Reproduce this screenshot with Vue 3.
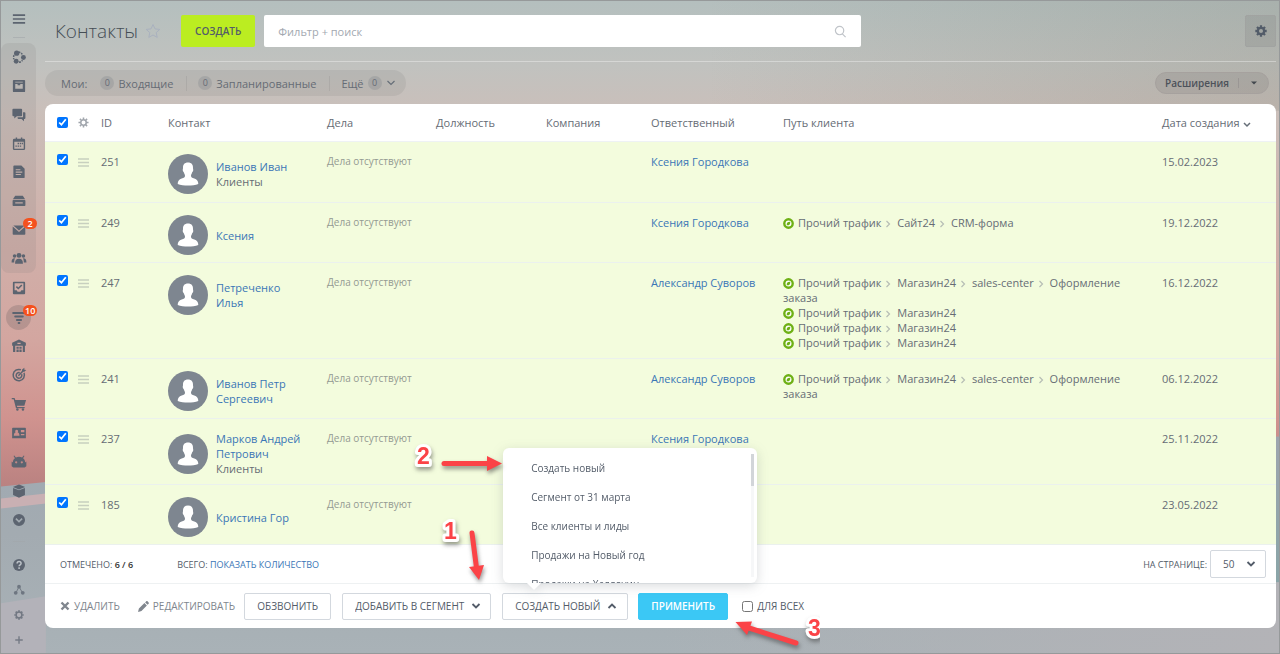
<script setup>
import { ref } from 'vue'

const groupIcons = [
  { name: 'network', label: 'Сеть' },
  { name: 'feed', label: 'Новости' },
  { name: 'chat', label: 'Чат' },
  { name: 'calendar', label: 'Календарь' },
  { name: 'docs', label: 'Документы' },
  { name: 'drive', label: 'Диск' },
  { name: 'mail', label: 'Почта', badge: '2' },
  { name: 'people', label: 'Группы' }
]
const mainIcons = [
  { name: 'tasks', label: 'Задачи' },
  { name: 'crm', label: 'CRM', badge: '10', active: true },
  { name: 'store', label: 'Склад' },
  { name: 'target', label: 'Маркетинг' },
  { name: 'cart', label: 'Магазины' },
  { name: 'card', label: 'Сотрудники' },
  { name: 'robot', label: 'Автоматизация' },
  { name: 'box', label: 'Маркет' },
  { name: 'more', label: 'Ещё' }
]
const bottomIcons = [
  { name: 'help', label: 'Помощь' },
  { name: 'tree', label: 'Структура' },
  { name: 'gear', label: 'Настройки' },
  { name: 'plus', label: 'Добавить' }
]

const icons = {
  menu: '<path d="M2 3.500h13v1.800H2zM2 7.600h13v1.800H2zM2 11.700h13v1.800H2z"/>',
  network: '<circle cx="6" cy="4.500" r="2.800"/><circle cx="13.200" cy="9" r="2.600"/><circle cx="5.500" cy="13" r="2.600"/><path d="M8 3.200a6 6 0 0 1 4 2.600M3.300 6.500a6 6 0 0 0-.2 4.500M8.500 14.200a6 6 0 0 0 3.700-2.200" fill="none" stroke="currentColor" stroke-width="1.600" stroke-dasharray="2 1"/>',
  feed: '<path fill-rule="evenodd" d="M3 2h11a1 1 0 0 1 1 1v11a1 1 0 0 1-1 1H3a1 1 0 0 1-1-1V3a1 1 0 0 1 1-1zM4.500 6.500v5h8v-5H9.800v1.300H7V6.500zM4.500 4v.9h8V4z"/>',
  chat: '<path d="M2.500 1.800h8.300a1 1 0 0 1 1 1v6a1 1 0 0 1-1 1H6.200L3.500 12.300V9.800h-1a1 1 0 0 1-1-1v-6a1 1 0 0 1 1-1z"/><path d="M12.800 5.500h1.500a1 1 0 0 1 1 1v5.300a1 1 0 0 1-1 1h-.5v2.400L11.200 12.800H8a1 1 0 0 1-1-1V11h4.800a1 1 0 0 0 1-1z"/>',
  calendar: '<path fill-rule="evenodd" d="M3.500 3H5V1.500h1.500V3h4V1.500H12V3h1.500A1.500 1.500 0 0 1 15 4.500v9a1.500 1.500 0 0 1-1.500 1.500h-10A1.500 1.500 0 0 1 2 13.500v-9A1.500 1.500 0 0 1 3.500 3zM3.500 6v7.500h10V6z"/><path d="M7 7.300h1.500v1.500H7zM9.300 7.300h1.500v1.500H9.300zM4.700 10h1.500v1.500H4.700zM7 10h1.500v1.500H7zM9.300 10h1.500v1.500H9.300zM11.500 7.300h1.300v1.500h-1.300z"/>',
  docs: '<path fill-rule="evenodd" d="M3.500 1.500h7.500L14.500 5v9a1 1 0 0 1-1 1h-10a1 1 0 0 1-1-1V2.500a1 1 0 0 1 1-1zM5 5.500v1.200h5V5.500zM5 8v1.200h7V8zM5 10.500v1.200h5.500v-1.200z"/>',
  drive: '<path d="M4.500 3h8L15 6.700H2z"/><path fill-rule="evenodd" d="M2.500 7.500h12a.8.800 0 0 1 .8.800v4.700a.8.800 0 0 1-.8.800h-12a.8.800 0 0 1-.8-.8V8.300a.8.800 0 0 1 .8-.8zM4.500 9.700v1.500h8V9.700z"/>',
  mail: '<path d="M2.500 3.800h12L8.500 9zM1.800 4.800l6.700 5.700L15.200 4.800v8a.8.800 0 0 1-.8.800H2.600a.8.800 0 0 1-.8-.8z"/>',
  people: '<circle cx="8.500" cy="4.700" r="2.600"/><circle cx="3.800" cy="5.300" r="1.900"/><circle cx="13.200" cy="5.300" r="1.900"/><path d="M4.300 13.500c0-3.600 1.100-5.200 4.200-5.200s4.200 1.600 4.200 5.200zM.6 12.200c0-3.200 1-4.500 3.700-4.400-.6 1.200-.9 2.300-.9 4.400zM16.400 12.200c0-3.200-1-4.500-3.700-4.400.6 1.200.9 2.300.9 4.400z"/>',
  tasks: '<path fill-rule="evenodd" d="M3 1.800h11a1 1 0 0 1 1 1v11.400a1 1 0 0 1-1 1H3a1 1 0 0 1-1-1V2.800a1 1 0 0 1 1-1zm.8 1.700v7.500h2.200l1 1.500h3l1-1.500h2.200V3.500z"/><path d="M5.700 7l2.100 2 3.700-3.700" fill="none" stroke="currentColor" stroke-width="1.700"/>',
  crm: '<path d="M2.300 4.200h12.400M4.500 8h8M6.300 11.600h4.400M8.100 14.800h.8" fill="none" stroke="currentColor" stroke-width="2.100" stroke-linecap="round"/>',
  store: '<path fill-rule="evenodd" d="M8.500 1.500L15.800 5v3.200h-1V15H12.500V8.200h-8V15H2.200V8.200h-1V5zM6.800 5v1.300h3.400V5z"/><path d="M5.800 9.200h2.400v2.200H5.800zM8.900 9.200h2.400v2.200H8.900zM5.800 12.200h2.400V15H5.800zM8.900 12.200h2.400V15H8.900z"/>',
  target: '<path d="M13.800 6.200A6 6 0 1 1 10.500 3M11.200 7.600A3 3 0 1 1 9.300 6M7.800 9.200L13 4" fill="none" stroke="currentColor" stroke-width="1.600"/><path d="M11.500 4.700l.3-2L14.200.800v2l2 .3L14.200 5z"/>',
  cart: '<path d="M.8 2h3l.8 2.200H16L14.200 10.300H6.300l.3 1.400H14.500v1.300H5.300L2.800 3.400H.8z"/><circle cx="6.800" cy="14.300" r="1.300"/><circle cx="12.700" cy="14.300" r="1.300"/>',
  card: '<path fill-rule="evenodd" d="M2 3h13a.8.800 0 0 1 .8.800V14H1.200V3.800A.8.800 0 0 1 2 3zM6 5a1.600 1.600 0 0 0-1 2.800C3.600 8.500 3 9.300 3 11.500h6c0-2.200-.6-3-2-3.700A1.600 1.600 0 0 0 6 5zM10.500 5.300v2.500h3.700V5.300zm0 4.200v1.300h3.700V9.500z"/>',
  robot: '<path fill-rule="evenodd" d="M3.500 1.500l1.700 2.200a8 8 0 0 1 6.600 0l1.700-2.200.8.600-1.500 2.300c1.500 1.100 2.200 2.600 2.200 4.600L16.300 8v5l-1.800 1.300h-12L.7 13V8L2 9c0-2 .7-3.500 2.200-4.600L2.700 2.100zM5.500 7.600a1.200 1.200 0 1 0 0 2.400 1.200 1.200 0 0 0 0-2.400zm6 0a1.200 1.200 0 1 0 0 2.400 1.200 1.200 0 0 0 0-2.400z"/>',
  box: '<path d="M8.500 1.500L15 4.200 8.500 7 2 4.200z"/><path d="M2.200 5.300l6.300 2.500 6.300-2.500v7.400l-6.300 2.900-6.300-2.900z"/>',
  more: '<path fill-rule="evenodd" d="M8.500 2.100a6.400 6.400 0 1 1 0 12.800 6.400 6.400 0 0 1 0-12.800zM5.800 6.500L4.600 7.700l3.900 3.800 3.900-3.800-1.200-1.200-2.700 2.600z"/>',
  help: '<circle cx="8.500" cy="8.500" r="6.400"/><path d="M6.500 7c0-2.900 4.200-2.700 4.200-.2 0 1.500-2.100 1.600-2.100 3.100M8.600 11v1.700" fill="none" stroke="#bcc2c8" stroke-width="1.600"/>',
  tree: '<g opacity=".75"><circle cx="8.500" cy="5" r="2"/><circle cx="5" cy="11.500" r="2"/><circle cx="12.500" cy="11.500" r="2"/><path d="M8.500 5L5.500 11M8.500 5l3.500 6" stroke="currentColor"/></g>',
  gear: '<g fill="none" stroke="currentColor" opacity=".75"><circle cx="8.500" cy="8.500" r="3.100" stroke-width="1.600"/><path d="M8.500 3.500v1.500M8.500 12v1.500M3.500 8.500H5M12 8.500h1.500M5 5l1 1M11 11l1 1M12 5l-1 1M5 12l1-1" stroke-width="1.800"/></g>',
  plus: '<path d="M4.500 8.500h8M8.500 4.500v8" stroke="currentColor" stroke-width="1.500" opacity=".7"/>'
}

const none = 'Дела отсутствуют'
const rows = ref([
  { id: '251', name: 'Иванов Иван', type: 'Клиенты', owner: 'Ксения Городкова', paths: [], date: '15.02.2023', checked: true },
  { id: '249', name: 'Ксения', owner: 'Ксения Городкова', paths: [['Сайт24', 'CRM-форма']], date: '19.12.2022', checked: true },
  { id: '247', name: 'Петреченко Илья', owner: 'Александр Суворов', paths: [['Магазин24', 'sales-center', 'Оформление заказа'], ['Магазин24'], ['Магазин24'], ['Магазин24']], date: '16.12.2022', checked: true },
  { id: '241', name: 'Иванов Петр Сергеевич', owner: 'Александр Суворов', paths: [['Магазин24', 'sales-center', 'Оформление заказа']], date: '06.12.2022', checked: true },
  { id: '237', name: 'Марков Андрей Петрович', type: 'Клиенты', owner: 'Ксения Городкова', paths: [], date: '25.11.2022', checked: true },
  { id: '185', name: 'Кристина Гор', owner: '', paths: [], date: '23.05.2022', checked: true }
])
const allChecked = ref(true)
const segments = ['Создать новый', 'Сегмент от 31 марта', 'Все клиенты и лиды', 'Продажи на Новый год', 'Продажи на Хеллоуин']
</script>

<template>
  <div class="page">
    <svg class="backdrop" viewBox="0 0 1280 654" preserveAspectRatio="none" aria-hidden="true">
      <defs>
        <linearGradient id="sky" x1="0" y1="0" x2="0" y2="1">
          <stop offset="0" stop-color="#b4bfbe" />
          <stop offset=".1" stop-color="#c1c2bf" />
          <stop offset=".17" stop-color="#cabfba" />
          <stop offset=".32" stop-color="#cfb3ad" />
          <stop offset=".52" stop-color="#d3a6a0" />
          <stop offset=".64" stop-color="#d0938f" />
          <stop offset=".75" stop-color="#b98180" />
        </linearGradient>
        <linearGradient id="shade" x1="0" y1="0" x2="1" y2="0">
          <stop offset=".55" stop-color="#807f70" stop-opacity="0" />
          <stop offset="1" stop-color="#807f70" stop-opacity=".22" />
        </linearGradient>
        <linearGradient id="sea" x1="0" y1="0" x2="0" y2="1">
          <stop offset="0" stop-color="#9fa9b2" />
          <stop offset=".45" stop-color="#a3abb1" />
          <stop offset="1" stop-color="#a9b2b7" />
        </linearGradient>
        <linearGradient id="teal" x1="0" y1="0" x2="0" y2="1">
          <stop offset="0" stop-color="#9da5ae" />
          <stop offset="1" stop-color="#8aa5a8" />
        </linearGradient>
        <linearGradient id="shore" x1="0" y1="0" x2="1" y2="0">
          <stop offset=".5" stop-color="#b3b3b7" stop-opacity="0" />
          <stop offset="1" stop-color="#b3b3b7" />
        </linearGradient>
      </defs>
      <rect width="1280" height="654" fill="url(#sky)" />
      <rect width="1280" height="110" fill="url(#shade)" />
      <path d="M0 487L60 481 1280 437V654H0z" fill="url(#sea)" />
      <path d="M0 499L45 494V504L0 509z" fill="#c9b0b3" />
      <path d="M0 604L45 597V654H0z" fill="#b3b2b9" />
      <path d="M1270 437h10v146h-10z" fill="url(#teal)" />
      <path d="M45 583H1280V654H45z" fill="url(#shore)" />
    </svg>

    <nav class="sidebar" aria-label="Главное меню">
      <button class="side-item menu" aria-label="Меню"><svg viewBox="0 0 17 17" v-html="icons.menu" /></button>
      <hr class="side-line">
      <div class="side-group panel">
        <a v-for="i in groupIcons" :key="i.name" class="side-item" href="#" :aria-label="i.label">
          <svg viewBox="0 0 17 17" v-html="icons[i.name]" />
          <span v-if="i.badge" class="badge">{{ i.badge }}</span>
        </a>
      </div>
      <div class="side-group main-group">
        <a v-for="i in mainIcons" :key="i.name" class="side-item" :class="{ active: i.active }" href="#" :aria-label="i.label">
          <svg viewBox="0 0 17 17" v-html="icons[i.name]" />
          <span v-if="i.badge" class="badge">{{ i.badge }}</span>
        </a>
      </div>
      <hr class="side-line">
      <div class="side-group bottom-group">
        <a v-for="i in bottomIcons" :key="i.name" class="side-item" href="#" :aria-label="i.label">
          <svg viewBox="0 0 17 17" v-html="icons[i.name]" />
        </a>
      </div>
    </nav>

    <main class="content">
      <header class="header">
        <h1>Контакты</h1>
        <svg class="star" viewBox="0 0 16 16" aria-hidden="true"><path d="M8 1.500l2 4.400 4.800.5-3.600 3.200 1 4.800L8 12l-4.200 2.400 1-4.800L1.200 6.400 6 5.900z" /></svg>
        <button class="create">СОЗДАТЬ</button>
        <label class="search">
          <input type="text" placeholder="Фильтр + поиск" aria-label="Фильтр и поиск">
          <svg viewBox="0 0 14 14" aria-hidden="true"><circle cx="6" cy="6" r="4.500" /><path d="M9 9.500l3.500 3.500" /></svg>
        </label>
        <button class="settings" aria-label="Настройки">
          <svg viewBox="0 0 16 16"><circle cx="8" cy="8" r="3.600" /><path d="M8 1.500v2.500M8 12v2.500M1.500 8H4M12 8h2.500M3.400 3.400l1.800 1.800M10.800 10.800l1.800 1.800M12.600 3.400l-1.800 1.800M3.400 12.600l1.800-1.800" /></svg>
        </button>
      </header>

      <div class="toolbar">
        <div class="counters">
          <span class="mine">Мои:</span>
          <a href="#"><b>0</b>Входящие</a>
          <a href="#"><b>0</b>Запланированные</a>
          <button>Ещё<b>0</b><svg class="chev" viewBox="0 0 10 10"><path d="M1.500 3L5 6.500 8.500 3" /></svg></button>
        </div>
        <div class="ext">
          <button>Расширения</button>
          <button class="ext-more" aria-label="Ещё"><svg viewBox="0 0 8 5"><path d="M0 .5h8L4 4.500z" /></svg></button>
        </div>
      </div>

      <section class="grid">
        <table>
          <colgroup>
            <col class="c-check"><col class="c-gear"><col class="c-id"><col class="c-name"><col class="c-deals"><col class="c-post">
            <col class="c-company"><col class="c-owner"><col class="c-path"><col class="c-date">
          </colgroup>
          <thead>
            <tr>
              <th class="check"><input v-model="allChecked" type="checkbox" aria-label="Выбрать все"></th>
              <th><svg class="th-gear" viewBox="0 0 12 12" aria-hidden="true"><circle cx="6" cy="6" r="3" /><path d="M6 .5v2M6 9.500v2M.5 6h2M9.500 6h2M2.100 2.100l1.400 1.400M8.500 8.500l1.400 1.400M9.900 2.100L8.500 3.500M2.100 9.900l1.400-1.400" /></svg></th>
              <th>ID</th><th>Контакт</th><th>Дела</th><th>Должность</th><th>Компания</th><th>Ответственный</th><th>Путь клиента</th>
              <th>Дата создания <svg class="sort" viewBox="0 0 10 10"><path d="M2 4l3 3 3-3" /></svg></th>
            </tr>
          </thead>
          <tbody>
            <tr v-for="r in rows" :key="r.id">
              <td class="check"><input v-model="r.checked" type="checkbox" :aria-label="'Выбрать ' + r.name"></td>
              <td><svg class="drag" viewBox="0 0 11 15" aria-hidden="true"><path d="M0 5h11M0 8.500h11M0 12h11" /></svg></td>
              <td>{{ r.id }}</td>
              <td class="contact">
                <div class="person">
                  <svg class="avatar" viewBox="0 0 40 40" aria-hidden="true">
                    <circle cx="20" cy="20" r="20" fill="#7e8690" />
                    <path fill="#fff" d="M20 8.500c3.600 0 5 2.200 5 5.200 0 1.600.4 1.300.2 2.800-.2 1.300-1 1.300-1.300 2.600-.2 1-.9 1.700-.9 2.500 0 2 1 2.300 3.300 3 2.600.8 4 2.400 4 5.400-5.500 2-15 2-20.600 0 0-3 1.400-4.600 4-5.400 2.300-.7 3.300-1 3.300-3 0-.8-.7-1.500-.9-2.500-.3-1.300-1.100-1.300-1.300-2.600-.2-1.500.2-1.200.2-2.800 0-3 1.400-5.200 5-5.200z" />
                  </svg>
                  <div class="who"><a href="#">{{ r.name }}</a><div v-if="r.type">{{ r.type }}</div></div>
                </div>
              </td>
              <td class="muted">{{ none }}</td>
              <td></td>
              <td></td>
              <td><a v-if="r.owner" href="#">{{ r.owner }}</a></td>
              <td class="paths">
                <div v-for="(p, k) in r.paths" :key="k">
                  <svg class="src" viewBox="0 0 11 11" aria-hidden="true"><circle cx="5.500" cy="5.500" r="4.200" /><path d="M3.700 7.300c-.3-2.600 1-3.700 3.600-3.600.1 2.600-1 3.900-3.600 3.600z" /></svg>Прочий трафик<template v-for="s in p" :key="s"><svg class="sep" viewBox="0 0 6 8" aria-hidden="true"><path d="M1.500 1L4.500 4l-3 3" /></svg> {{ s }}</template>
                </div>
              </td>
              <td>{{ r.date }}</td>
            </tr>
          </tbody>
        </table>

        <div class="summary">
          <span class="marked">ОТМЕЧЕНО: <b>6 / 6</b></span>
          <span>ВСЕГО: <a href="#">ПОКАЗАТЬ КОЛИЧЕСТВО</a></span>
          <label class="per-page">НА СТРАНИЦЕ:
            <span class="select">
              <select><option>50</option></select>
              <svg class="chev bold" viewBox="0 0 10 10"><path d="M1.500 3L5 6.500 8.500 3" /></svg>
            </span>
          </label>
        </div>

        <div class="actions">
          <button class="plain delete"><svg viewBox="0 0 10 10"><path d="M1.500 1.500l7 7M8.500 1.500l-7 7" stroke="currentColor" stroke-width="2.400" /></svg>УДАЛИТЬ</button>
          <button class="plain edit"><svg viewBox="0 0 12 12"><path fill="currentColor" d="M0 12l1-3.800L7 2.300 9.700 5 3.800 11zM7.800 1.500L9 .4c.4-.4 1-.4 1.400 0l1.200 1.200c.4.400.4 1 0 1.400L10.500 4.200z" /></svg>РЕДАКТИРОВАТЬ</button>
          <button class="btn call">ОБЗВОНИТЬ</button>
          <span class="select segment">
            <select aria-label="Действие"><option>ДОБАВИТЬ В СЕГМЕНТ</option></select>
            <svg class="chev bold" viewBox="0 0 10 10"><path d="M1.500 3L5 6.500 8.500 3" /></svg>
          </span>
          <div class="choose">
            <button class="btn" aria-haspopup="listbox" aria-expanded="true">СОЗДАТЬ НОВЫЙ<svg class="chev bold" viewBox="0 0 10 10"><path d="M1.500 7L5 3.500 8.500 7" /></svg></button>
            <div class="popup">
              <ul role="listbox" aria-label="Сегмент">
                <li v-for="(s, i) in segments" :key="s" role="option" :aria-selected="i === 0">{{ s }}</li>
              </ul>
              <span class="track"><span class="thumb"></span></span>
            </div>
          </div>
          <button class="btn apply">ПРИМЕНИТЬ</button>
          <label class="for-all"><input type="checkbox">ДЛЯ ВСЕХ</label>
        </div>
      </section>
    </main>

    <svg class="marks" width="420" height="220" viewBox="400 434 420 220" aria-hidden="true">
      <g class="arrows">
        <path d="M444 463.500H490" /><path class="head" d="M487 456L502 463.500 487 471z" />
        <path d="M472 533L476.500 568" /><path class="head" d="M469 567L484 565 479 580z" />
        <path d="M796 643L749 628" /><path class="head" d="M735.500 622L752 621.500 747 635z" />
      </g>
      <text x="417" y="464">2</text>
      <text x="444" y="539">1</text>
      <text x="808" y="636">3</text>
    </svg>
  </div>
</template>

<style>
body { margin: 0; }
</style>

<style scoped>
.page {
  position: relative;
  display: flex;
  min-height: 100vh;
  box-sizing: border-box;
  border: 1px solid #96999a;
  font: 11px/15px "Open Sans", "Noto Sans", sans-serif;
  color: #666c75;
  overflow: hidden;
}
.page *, .page *::before { box-sizing: border-box; }
button, select, input { font: inherit; color: inherit; margin: 0; }
button { border: 0; background: none; padding: 0; white-space: nowrap; cursor: pointer; }
a { color: #3a76b6; text-decoration: none; }
svg { display: block; flex: none; }
.backdrop { position: absolute; inset: 0; width: 100%; height: 100%; }

.sidebar { position: relative; flex: none; width: 44px; padding-right: 9px; color: #5c6470; }
.side-item { position: relative; display: flex; flex: 1; align-items: center; justify-content: center; width: 100%; color: inherit; fill: currentColor; }
.side-item svg { position: relative; width: 16px; height: 16px; }
.menu { height: 36px; }
.side-line { width: 12px; height: 1px; margin: 0 auto; border: 0; background: #a1a7aa; opacity: .6; }
.side-group { display: flex; flex-direction: column; }
.panel { height: 230px; margin-top: 5px; border-radius: 8px; background: rgba(130, 125, 125, .16); }
.main-group { height: 260px; margin-top: 1px; margin-bottom: 7px; }
.bottom-group { height: 99px; margin-top: 11px; }
.active::before { content: ""; position: absolute; width: 25px; height: 25px; border-radius: 50%; background: rgba(120, 105, 105, .32); }
.badge { position: absolute; left: 22px; top: 2px; min-width: 14px; height: 11px; padding: 0 2px; border-radius: 6px; background: #f4511e; color: #fff; font-size: 9px; font-weight: 600; line-height: 11px; text-align: center; }

.content { position: relative; flex: 1; min-width: 0; padding-right: 3px; }
.header { display: flex; align-items: center; padding: 14px 0; border-bottom: 1px solid rgba(255, 255, 255, .35); height: 61px; }
h1 { margin: 0 7px 0 10px; font-size: 19px; line-height: 28px; font-weight: 300; color: #454d55; }
.star { width: 16px; height: 16px; margin-right: 20px; fill: none; stroke: #a9b1be; stroke-width: 1; }
.create { height: 32px; padding: 0 14px; border-radius: 2px; background: #bbed21; color: #535c69; font-size: 10px; font-weight: 600; }
.search { display: flex; align-items: center; flex: 0 1 597px; height: 32px; margin-left: 9px; padding: 0 14px; border-radius: 2px; background: #fff; }
.search input { flex: 1; min-width: 0; border: 0; outline: 0; padding: 0; background: none; }
.search input::placeholder { color: #a2a8b0; opacity: 1; }
.search svg { width: 13px; height: 13px; fill: none; stroke: #c0c4c9; stroke-width: 1.3; }
.settings { display: grid; place-items: center; width: 31px; height: 32px; margin-left: auto; border: 1px solid #a1a3a1; border-radius: 2px; background: rgba(120, 120, 120, .2); }
.settings svg { width: 14px; height: 14px; fill: none; stroke: #535c69; stroke-width: 2.6; }

.toolbar { display: flex; align-items: center; justify-content: space-between; margin: 8px 0; padding-right: 7px; }
.counters { display: flex; align-items: center; height: 26px; padding: 0 10px 0 16px; border-radius: 13px; background: rgba(110, 110, 110, .13); }
.counters a, .counters button { display: flex; align-items: center; color: inherit; }
.counters a { padding-right: 13px; margin-right: 11px; border-right: 1px solid rgba(110, 110, 110, .16); }
.counters a b { margin-right: 4px; }
.counters b { width: 14px; height: 14px; border-radius: 7px; background: rgba(95, 105, 115, .2); font-size: 9px; line-height: 14px; font-weight: 400; text-align: center; }
.counters button b { margin: 0 4px; }
.mine { margin-right: 13px; }
.chev { width: 10px; height: 10px; fill: none; stroke: #666e78; stroke-width: 1.2; }
.bold { stroke: #535c69; stroke-width: 1.8; }
.ext { display: flex; align-items: center; height: 22px; padding-left: 9px; border: 1px solid #a6a19e; border-radius: 11px; background: rgba(120, 115, 115, .2); color: #4d525a; font-size: 10px; font-weight: 600; }
.ext-more { display: grid; place-items: center; width: 30px; height: 10px; margin-left: 9px; border-left: 1px solid #9a9694; }
.ext-more svg { width: 6px; height: 4px; fill: #43484e; }

.grid { border-radius: 8px; background: #fff; }
table { width: 100%; table-layout: fixed; border-collapse: separate; border-spacing: 0; }
.c-check { width: 33px; } .c-gear { width: 23px; } .c-id { width: 67px; } .c-name { width: 159px; } .c-deals { width: 109px; }
.c-post { width: 110px; } .c-company { width: 105px; } .c-owner { width: 132px; } .c-date { width: 114px; }
th, td { padding: 0; text-align: left; font-weight: 400; }
th { height: 38px; border-bottom: 1px solid #eef2f4; }
th.check, td.check { padding-left: 12px; }
.check input { display: block; width: 11px; height: 11px; }
td { padding-top: 12px; padding-bottom: 7px; vertical-align: top; background: #f3fcdd; border-bottom: 1px solid #ebf1ee; }
tbody tr:nth-child(odd) td { padding-bottom: 8px; }
.th-gear { width: 11px; height: 11px; fill: none; stroke: #a0a5ac; stroke-width: 1.7; }
.sort { display: inline-block; width: 10px; height: 10px; vertical-align: -2px; fill: none; stroke: #666e78; stroke-width: 1.5; }
.drag { width: 11px; height: 15px; stroke: #c8d0bf; stroke-width: 1.4; }
.person { display: flex; align-items: center; gap: 8px; }
.avatar { width: 40px; height: 40px; }
.who { max-width: 88px; }
td.muted { color: #949a92; font-size: 10px; }
.paths { padding-right: 30px; }
.src { display: inline-block; width: 11px; height: 11px; margin-right: 4px; vertical-align: -2px; fill: #fff; stroke: #6eb015; stroke-width: 2.4; }
.src path { fill: #6eb015; stroke: none; }
.sep { display: inline-block; width: 6px; height: 8px; margin: 0 3px 0 4px; vertical-align: -1px; fill: none; stroke: #b6bdb5; stroke-width: 1.2; }

.summary { display: flex; align-items: center; height: 39px; padding: 0 10px 0 15px; border-bottom: 1px solid #eef1f2; font-size: 9px; color: #535c69; }
.summary b { font-weight: 600; color: #333; }
.marked { margin-right: 44px; }
.per-page { display: flex; align-items: center; gap: 3px; margin-left: auto; }
.select { position: relative; display: flex; align-items: center; }
.select select { width: 56px; height: 28px; padding: 0 12px; border: 1px solid #d3d8de; border-radius: 2px; background: #fff; appearance: none; font-size: 10px; color: #535c69; outline: 0; }
.select .chev { position: absolute; right: 10px; pointer-events: none; }

.actions { display: flex; align-items: center; height: 44px; padding-left: 15px; font-size: 10px; color: #535c69; }
.plain { display: flex; align-items: center; gap: 4px; color: #80868e; }
.plain svg { width: 10px; height: 10px; }
.edit { margin: 0 9px 0 18px; }
.edit svg { width: 11px; height: 11px; }
.btn { display: flex; align-items: center; justify-content: center; height: 27px; border: 1px solid #d3d8de; border-radius: 2px; background: #fff; font-weight: 500; }
.call { width: 87px; margin-right: 11px; }
.segment { margin-right: 11px; }
.segment select { width: 149px; height: 27px; font-weight: 500; }
.choose { position: relative; margin-right: 10px; }
.choose .btn { width: 126px; padding: 0 10px 0 12px; justify-content: space-between; }
.apply { width: 90px; border-color: #3bc8f5; background: #3bc8f5; color: #fff; font-weight: 600; }
.for-all { display: flex; align-items: center; gap: 4px; margin-left: 14px; }
.for-all input { width: 11px; height: 11px; }
.popup { position: absolute; left: 1px; bottom: 37px; width: 254px; height: 135px; border-radius: 6px; background: #fff; filter: drop-shadow(0 3px 6px rgba(80, 90, 100, .22)); }
.popup::before { content: ""; position: absolute; left: 26px; bottom: -5px; width: 10px; height: 10px; background: #fff; transform: rotate(45deg); }
.popup ul { position: relative; height: 100%; margin: 0; padding: 6px 0 0 28px; overflow: hidden; list-style: none; font-size: 10px; line-height: 29px; }
.track { position: absolute; top: 6px; right: 3px; bottom: 6px; width: 3px; background: #f6f7f8; }
.thumb { display: block; height: 32px; background: #d2d5d9; }

.marks { position: absolute; left: 399px; top: 433px; pointer-events: none; }
.arrows { fill: none; stroke: #fb4347; stroke-width: 5; stroke-linecap: round; filter: drop-shadow(1px 3px 2px rgba(60, 60, 60, .55)); }
.head { fill: #fb4347; stroke: none; }
.marks text { font: 700 23px "Liberation Sans", sans-serif; fill: #fb4347; stroke: #fff; stroke-width: 6; stroke-linejoin: round; paint-order: stroke; filter: drop-shadow(1px 3px 2px rgba(60, 60, 60, .5)); }
</style>
